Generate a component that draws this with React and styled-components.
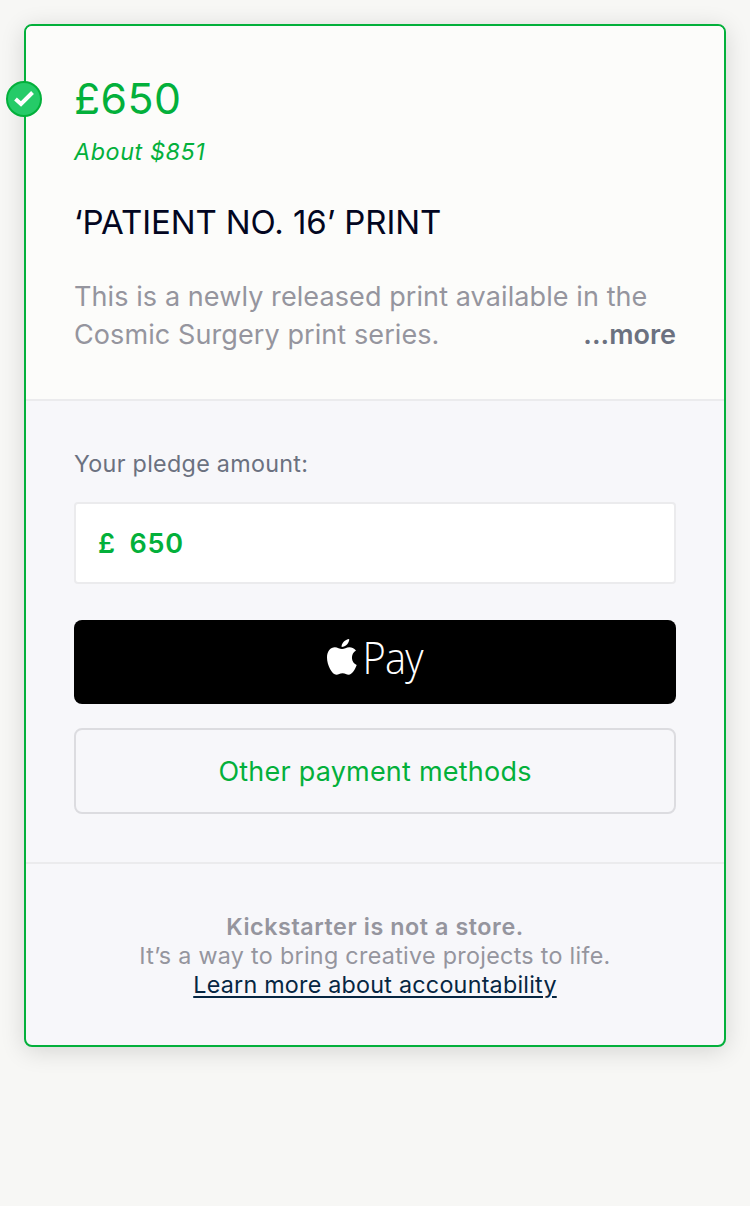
import React from "react";
import styled, { createGlobalStyle } from "styled-components";

const Global = createGlobalStyle`
  *{box-sizing:border-box}
  body{margin:0;background:#f7f7f5;font-family:Inter,"Liberation Sans",sans-serif}
`;
const Page = styled.main`padding:24px;min-height:1206px;`;
const Card = styled.article`
  position:relative;height:1023px;border:2px solid #03b03b;border-radius:8px;background:#f7f7fa;
  box-shadow:0 4px 24px rgba(0,0,0,.14);
`;
const Badge = styled.span`
  position:absolute;left:-20px;top:55px;width:36px;height:36px;border-radius:50%;
  background:#25cb68;border:2px solid #03b03b;display:flex;align-items:center;justify-content:center;
`;
const Reward = styled.section`
  height:375px;padding:48px;background:#fcfcfa;border-bottom:2px solid #ebebed;border-radius:6px 6px 0 0;
`;
const Text = styled.div`
  width:max-content;white-space:nowrap;
  font-size:${p => p.$size}px;line-height:${p => p.$line}px;letter-spacing:${p => p.$track || 0}px;
  color:${p => p.$color};font-weight:${p => p.$weight || 400};margin-top:${p => p.$top || 0}px;
`;
const About = styled(Text)`font-style:italic;`;
const Row = styled.div`display:flex;justify-content:space-between;`;
const Pledge = styled.section`height:463px;padding:48px;border-bottom:2px solid #ebebed;`;
const Amount = styled.div`
  height:82px;margin-top:23px;padding:2px 0 0 22px;display:flex;align-items:center;gap:14px;
  background:#fff;border:2px solid #ebebed;border-radius:4px;
`;
const Button = styled.button`
  width:100%;display:flex;align-items:center;justify-content:center;font-family:inherit;padding:0;
`;
const ApplePay = styled(Button)`height:84px;margin-top:36px;padding-bottom:8px;background:#000;border:0;border-radius:8px;`;
const AppleMark = styled.svg`display:block;width:34px;height:48px;`;
const PayText = styled.span`
  width:66px;height:64px;padding-left:4px;color:#fff;white-space:nowrap;text-align:left;
  font:300 45px/62px "Open Sans",sans-serif;letter-spacing:-1px;
  transform:scaleX(.885);transform-origin:left center;
`;
const Other = styled(Button)`height:86px;margin-top:24px;padding-top:2px;background:transparent;border:2px solid #dcdce0;border-radius:8px;`;
const Footer = styled.footer`padding-top:48px;display:flex;flex-direction:column;align-items:center;`;
const Link = styled.a`text-decoration:underline;text-decoration-thickness:2px;text-underline-offset:3px;`;

export default function App() {
  return (
    <Page>
      <Global />
      <Card>
        <Badge>
          <svg width="20" height="16" viewBox="0 0 20 16" fill="none" stroke="#fff" strokeWidth="4"><path d="M1.5 8 7 13 18.5 1.5" /></svg>
        </Badge>
        <Reward>
          <Text $size={42.8} $line={49} $track={0.4} $color="#03b03b">£650</Text>
          <About $size={23.3} $line={30} $track={0.6} $top={14} $color="#03b03b">About $851</About>
          <Text $size={33} $line={42} $track={-0.09} $top={34} $color="#020621">‘PATIENT NO. 16’ PRINT</Text>
          <Text $size={27} $line={38} $track={0.09} $top={35} $color="#95959e">This is a newly released print available in the</Text>
          <Row>
            <Text $size={27} $line={38} $track={0.09} $color="#95959e">Cosmic Surgery print series.</Text>
            <Text $size={27} $line={38} $weight={600} $color="#6b7180">...more</Text>
          </Row>
        </Reward>
        <Pledge>
          <Text $size={23.3} $line={30} $track={0.3} $color="#6b7180">Your pledge amount:</Text>
          <Amount>
            <Text $size={27} $line={34} $weight={600} $track={0.5} $color="#03b03b">£</Text>
            <Text $size={27} $line={34} $weight={600} $track={0.7} $color="#03b03b">650</Text>
          </Amount>
          <ApplePay aria-label="Apple Pay">
            <AppleMark viewBox="0 0 34 48" fill="#fff">
              <path d="M24.2 5c.3 3.8-3.7 8-7.6 8-.4-3.8 3.5-7.5 7.6-8Z" />
              <path d="M31 16.5C29 13.8 26.6 13.2 24.5 13.2c-3.2 0-5.1 1.8-7.5 1.8-2.3 0-4.6-1.8-7.1-1.8C5.5 13.2 2 17 2 23.4c0 7.7 5 17.3 9.4 17.3 2.2 0 3.3-1.4 6.2-1.4 2.8 0 3.7 1.4 6.1 1.4 3.2 0 6.6-5.5 8-9.7-5.9-2.4-6.5-11.2-.7-14.5Z" />
            </AppleMark>
            <PayText>Pay</PayText>
          </ApplePay>
          <Other><Text $size={27} $line={34} $track={0.22} $color="#03b03b">Other payment methods</Text></Other>
        </Pledge>
        <Footer>
          <Text $size={23.3} $line={29} $track={0.57} $weight={600} $color="#95959e">Kickstarter is not a store.</Text>
          <Text $size={23.3} $line={29} $track={0.3} $color="#95959e">It’s a way to bring creative projects to life.</Text>
          <Text $size={23.3} $line={29} $track={0.24} $color="#062642"><Link>Learn more about accountability</Link></Text>
        </Footer>
      </Card>
    </Page>
  );
}
